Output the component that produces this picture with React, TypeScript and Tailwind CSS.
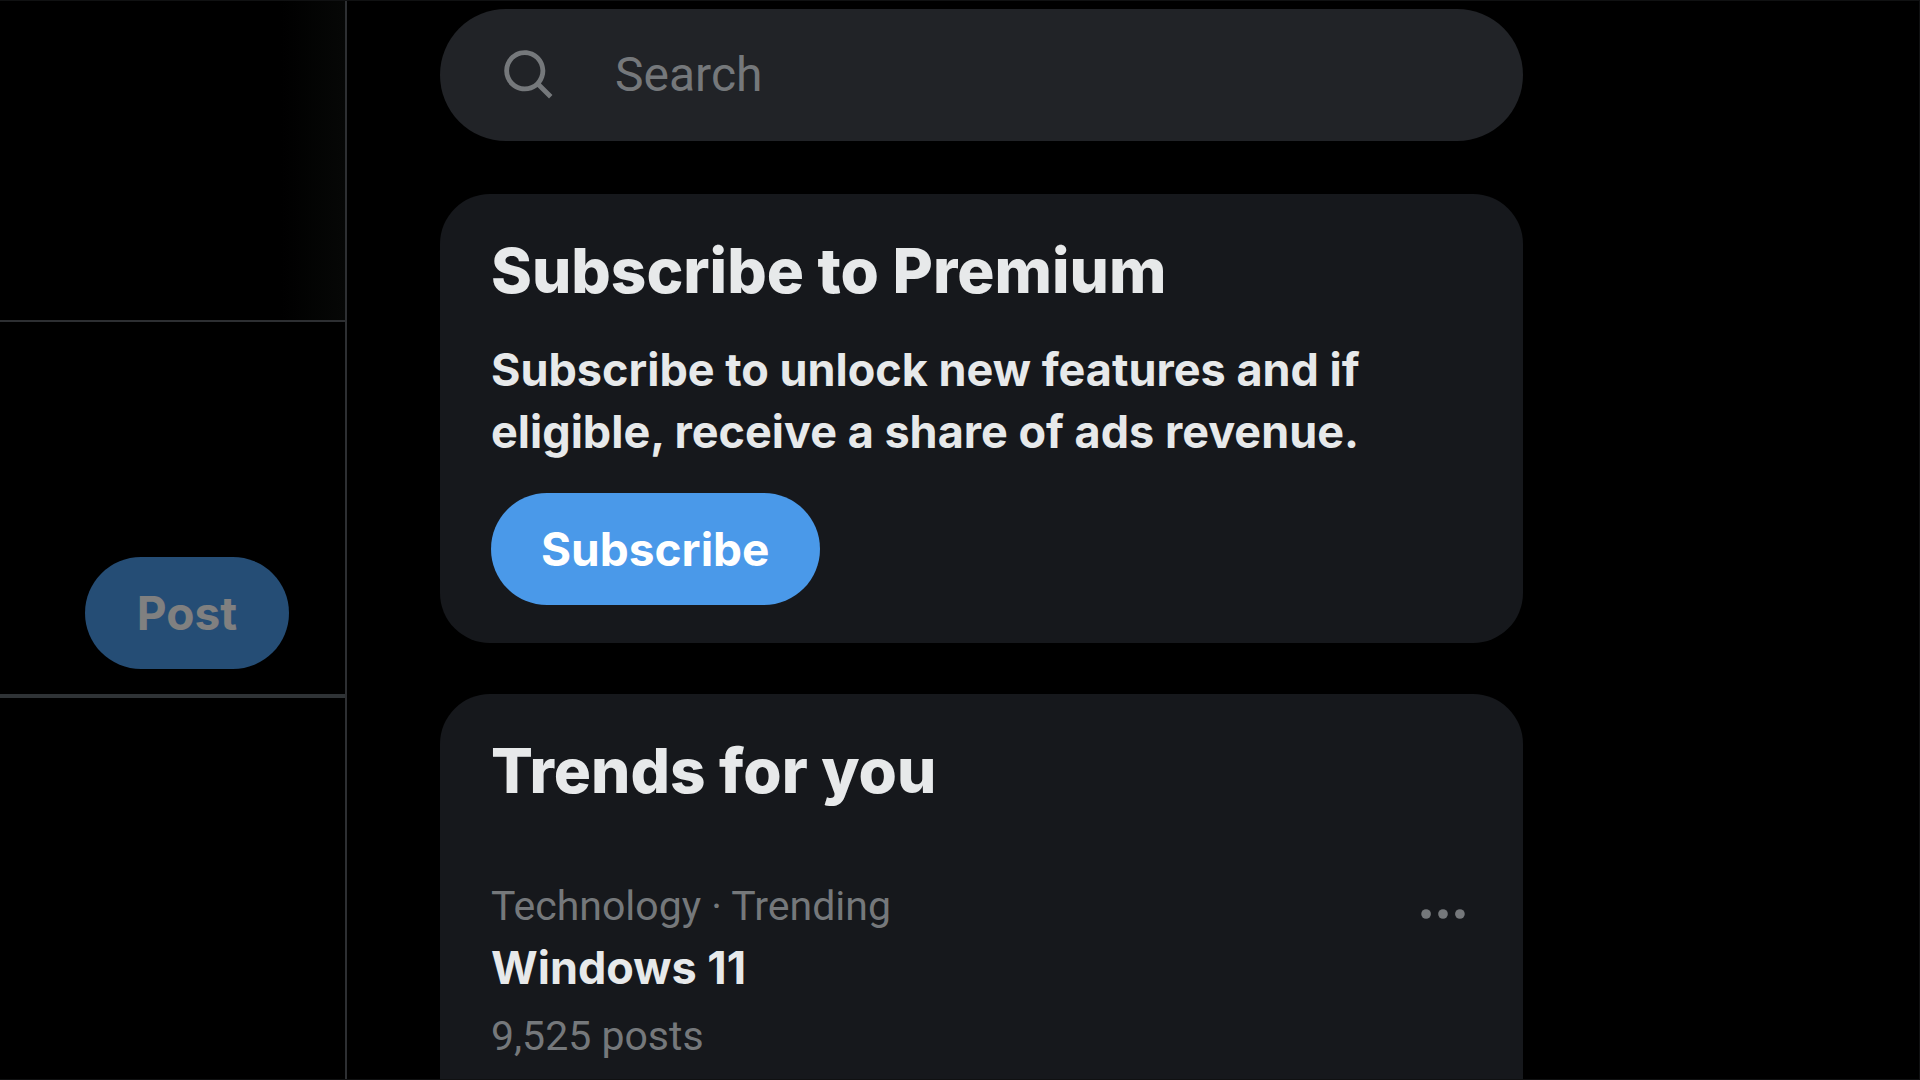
import React from 'react';

interface Trend {
  category: string;
  title: string;
  posts: string;
}

const TRENDS: Trend[] = [
  { category: 'Technology · Trending', title: 'Windows 11', posts: '9,525 posts' },
];

const SearchIcon: React.FC = () => (
  <svg viewBox="0 0 24 24" className="size-[58px] shrink-0 fill-[#75787b]" aria-hidden="true">
    <path d="M10.25 3.75c-3.59 0-6.5 2.91-6.5 6.5s2.91 6.5 6.5 6.5c1.795 0 3.419-.726 4.596-1.904 1.178-1.177 1.904-2.801 1.904-4.596 0-3.59-2.91-6.5-6.5-6.5zm-8.5 6.5c0-4.694 3.806-8.5 8.5-8.5s8.5 3.806 8.5 8.5c0 1.986-.682 3.815-1.824 5.262l4.781 4.781-1.414 1.414-4.781-4.781c-1.447 1.142-3.276 1.824-5.262 1.824-4.694 0-8.5-3.806-8.5-8.5z" />
  </svg>
);

const MoreIcon: React.FC = () => (
  <svg viewBox="0 0 24 24" className="size-[58px] fill-[#75787b]" aria-hidden="true">
    <circle cx="5" cy="12" r="2" />
    <circle cx="12" cy="12" r="2" />
    <circle cx="19" cy="12" r="2" />
  </svg>
);

const Timeline: React.FC = () => {
  return (
    <main className="w-[347px] shrink-0 border-r-2 border-[#2d2f32]">
      <div className="flex h-[321px] justify-end border-b-2 border-[#2d2f32]">
        <div className="w-16 bg-linear-to-r from-transparent to-[#060706]"></div>
      </div>
      <div className="flex justify-end border-b-4 border-[#2f3336] pt-[235px] pr-14 pb-[25px]">
        <button
          type="button"
          disabled
          className="h-28 rounded-full bg-[#4a99e9] px-[52px] text-[46px] font-bold text-white opacity-50"
        >
          Post
        </button>
      </div>
    </main>
  );
};

const SearchBox: React.FC = () => {
  return (
    <label className="flex h-[132px] items-center gap-[57px] rounded-full bg-[#212327] pr-10 pl-[60px]">
      <SearchIcon />
      <input
        type="text"
        aria-label="Search"
        placeholder="Search"
        className="w-full min-w-0 bg-transparent font-['Roboto',sans-serif] text-[48px] text-[#e7e9ea] outline-none placeholder:text-[#75787b]"
      />
    </label>
  );
};

const PremiumCard: React.FC = () => {
  return (
    <section className="mt-[53px] rounded-[50px] bg-[#16181c] px-[51px] pt-[39px] pb-[38px]">
      <h2 className="text-[62px] leading-[76px] font-extrabold">Subscribe to Premium</h2>
      <p className="mt-[30px] text-[45px] leading-[62px] font-bold">
        Subscribe to unlock new features and if eligible, receive a share of ads revenue.
      </p>
      <button
        type="button"
        className="mt-[30px] h-28 rounded-full bg-[#4a99e9] px-[50px] text-[46px] font-bold text-white"
      >
        Subscribe
      </button>
    </section>
  );
};

const TrendsCard: React.FC = () => {
  return (
    <section className="mt-[51px] flex-1 rounded-t-[50px] bg-[#16181c] px-[51px] pt-[39px]">
      <h2 className="text-[62px] leading-[76px] font-extrabold">Trends for you</h2>
      {TRENDS.map((trend) => (
        <div key={trend.title} className="mt-[72px] flex items-start justify-between">
          <div>
            <div className="font-['Roboto',sans-serif] text-[41px] leading-[50px] text-[#75787b]">
              {trend.category}
            </div>
            <div className="mt-1.5 text-[45px] leading-[62px] font-bold">{trend.title}</div>
            <div className="mt-3 font-['Roboto',sans-serif] text-[41px] leading-[50px] text-[#75787b]">
              {trend.posts}
            </div>
          </div>
          <button type="button" aria-label="More" className="mt-1 rounded-full">
            <MoreIcon />
          </button>
        </div>
      ))}
    </section>
  );
};

export default function App() {
  return (
    <div className="flex min-h-screen border-y border-r border-[#101112] bg-black font-['Inter',sans-serif] text-[#e7e9ea]">
      <Timeline />
      <aside className="ml-[93px] flex w-full max-w-[1083px] flex-col pt-2">
        <SearchBox />
        <PremiumCard />
        <TrendsCard />
      </aside>
    </div>
  );
}
